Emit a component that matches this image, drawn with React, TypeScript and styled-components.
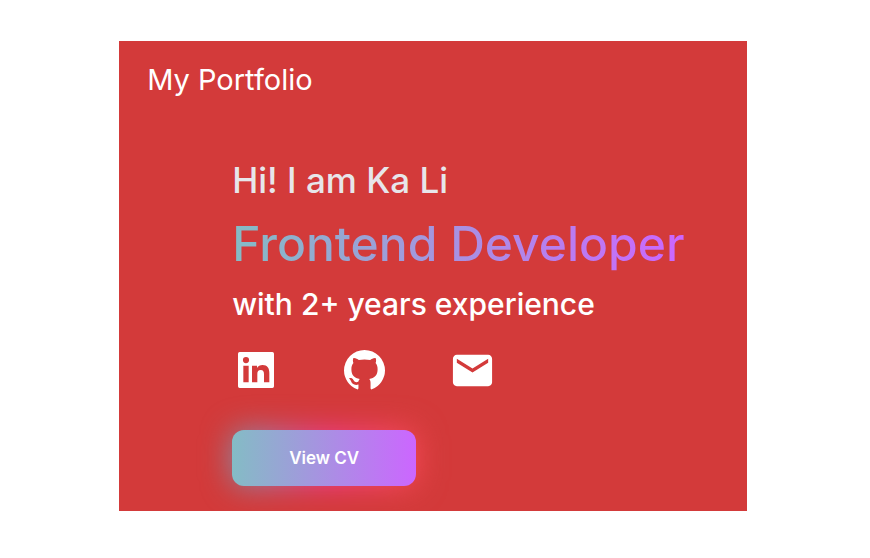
import React from "react";
import styled, { createGlobalStyle } from "styled-components";
import { MdEmail } from "react-icons/md";

const GlobalStyle = createGlobalStyle`
  * { box-sizing: border-box; }
  body {
    margin: 0;
    background: #fff;
    font-family: Inter, "Noto Sans", sans-serif;
  }
`;

const gradient = "linear-gradient(to right, #84bcc5, #cc66ff)";

const Page = styled.div`
  padding: 41px 14.1% 47px 13.7%;
`;

const Hero = styled.div`
  background: #d33a3a;
  color: #fff;
  overflow: hidden;
`;

const Header = styled.header`
  padding: 19px 28px;
  font-size: 29px;
  line-height: 40px;
`;

const Main = styled.main`
  padding: 37px 24px 25px 113px;
`;

const Title = styled.h1`
  margin: 0;
  font-weight: 500;
  font-size: 35px;
  line-height: 48px;
  color: #e7e6ea;
`;

const Role = styled.h2`
  width: fit-content;
  margin: 0;
  font-weight: 500;
  font-size: 48px;
  line-height: 80px;
  white-space: nowrap;
  color: transparent;
  background: ${gradient};
  background-clip: text;
`;

const Experience = styled.h3`
  margin: 0;
  font-weight: 500;
  font-size: 30px;
  line-height: 40px;
`;

const Socials = styled.nav`
  display: flex;
  gap: 60px;
  margin: 22px 0 36px;
`;

const SocialLink = styled.a`
  display: grid;
  place-items: center;
  width: 48px;
  height: 48px;
  color: #fff;
`;

const CvButton = styled.button`
  position: relative;
  isolation: isolate;
  display: block;
  width: 184px;
  height: 56px;
  border: 0;
  border-radius: 12px;
  background: transparent;
  color: #fff;
  font: 600 17px Inter, "Noto Sans", sans-serif;
  cursor: pointer;

  &::before,
  &::after {
    content: "";
    position: absolute;
    inset: 0;
    z-index: -1;
    border-radius: inherit;
    background: ${gradient};
  }

  &::before {
    background: linear-gradient(to right, #7898a8, #ee3b92 50%, #f84e54);
    filter: blur(15px);
  }
`;

const LinkedinIcon = () => (
  <svg width="36" height="36" viewBox="0 0 108 108" fill="currentColor" fillRule="evenodd" aria-hidden="true">
    <path d="M5 0H103Q108 0 108 5V103Q108 108 103 108H5Q0 108 0 103V5Q0 0 5 0Z M24 15a9.300 9.300 0 1 0 0 18.600a9.300 9.300 0 1 0 0-18.600Z M16 41V91H32V41Z M42 41V91H58V66C58 58 61 54 68 54C76 54 78 59 78 67V91H94V63C94 48 88 39 74 39C66 39 60 43 57 48V41Z" />
  </svg>
);

const GithubIcon = () => (
  <svg width="41" height="40" viewBox="0 0 122 119" fill="currentColor" aria-hidden="true">
    <path d="M61 0A61 61 0 0 0 0 61A61 61 0 0 0 39 117Q43 118 43 113V103C29 106 24 100 21 93C19 89 17 87 15 85C19 82 25 84 28 89C32 96 37 97 43 94C44 90 45 88 47 86C31 83 22 75 22 57C22 49 24 44 28 39C26 34 26 29 28 24C34 23 40 27 44 30Q61 26 78 30C82 27 88 23 94 24C96 29 96 34 94 39C98 44 100 49 100 57C100 75 91 83 75 86C78 89 79 93 79 98V113Q79 118 83 117A61 61 0 0 0 122 61A61 61 0 0 0 61 0Z" />
  </svg>
);

export default function App() {
  return (
    <>
      <GlobalStyle />
      <Page>
        <Hero>
          <Header>My Portfolio</Header>
          <Main>
            <Title>Hi! I am Ka Li</Title>
            <Role>Frontend Developer</Role>
            <Experience>with 2+ years experience</Experience>
            <Socials aria-label="Contact links">
              <SocialLink href="#linkedin" aria-label="LinkedIn"><LinkedinIcon /></SocialLink>
              <SocialLink href="#github" aria-label="GitHub"><GithubIcon /></SocialLink>
              <SocialLink href="#email" aria-label="Email"><MdEmail size={47} /></SocialLink>
            </Socials>
            <CvButton type="button">View CV</CvButton>
          </Main>
        </Hero>
      </Page>
    </>
  );
}
